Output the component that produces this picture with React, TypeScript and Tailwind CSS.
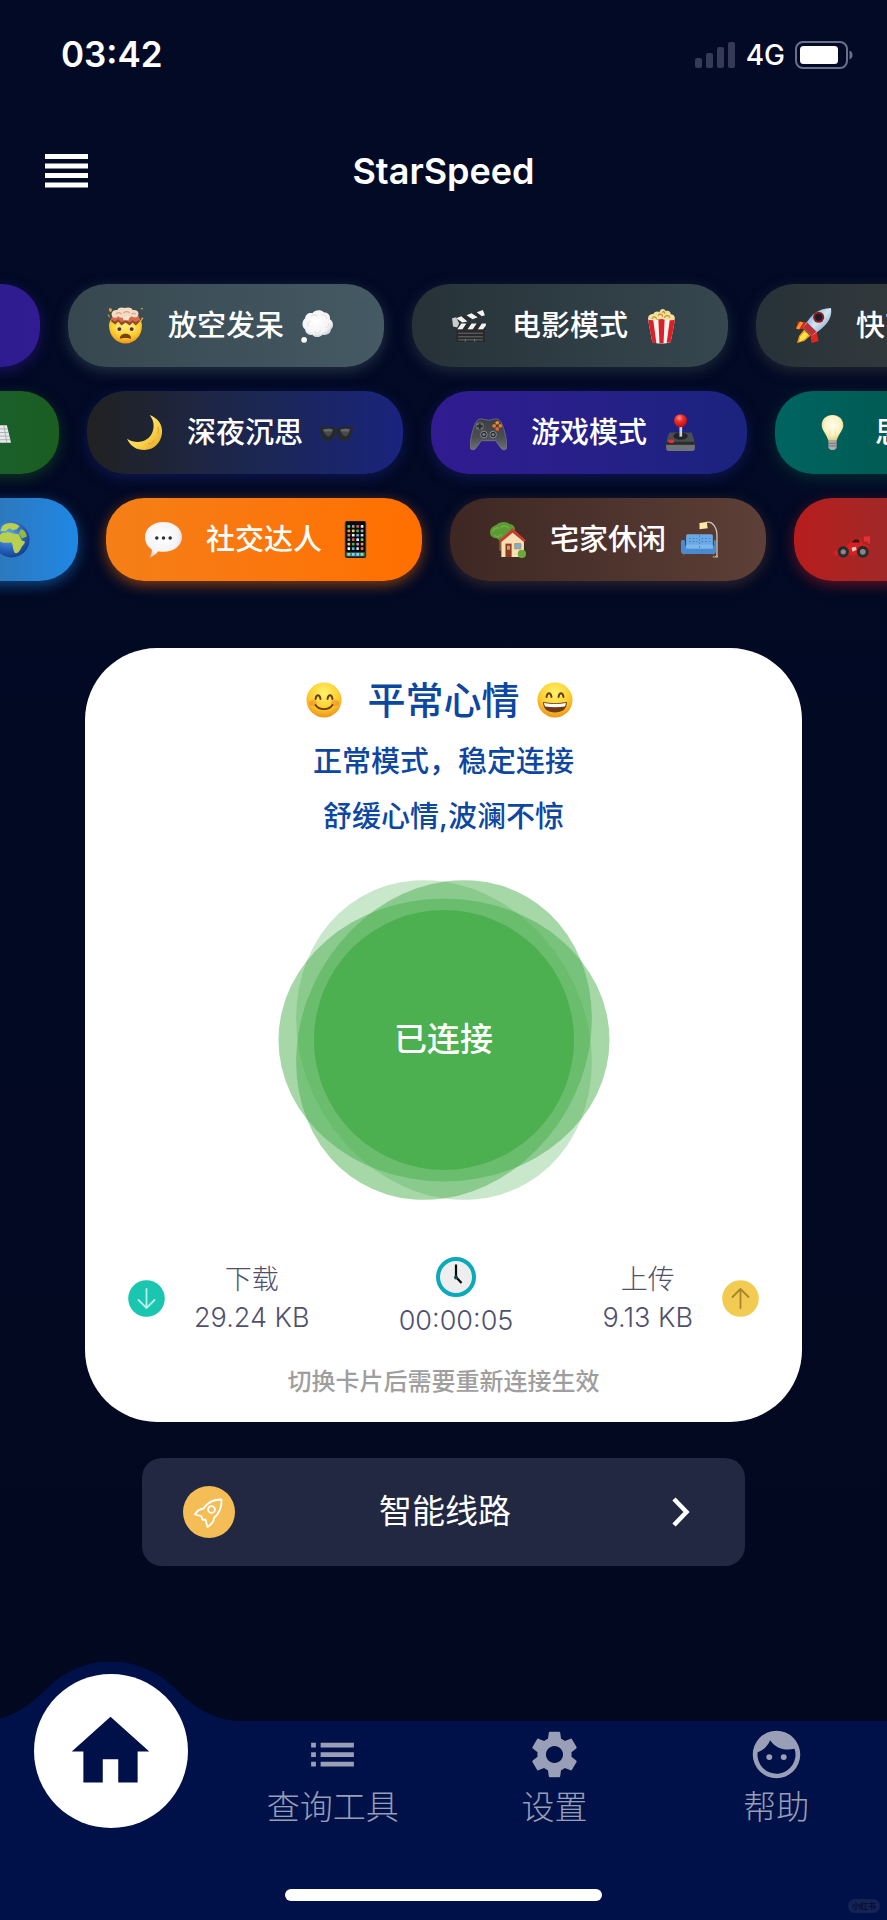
import type { ReactNode } from "react";
import { MdHome, MdList, MdSettings } from "react-icons/md";

function Emoji({ label, size = "size-[37px]", children }: { label: string; size?: string; children: ReactNode }) {
  return (
    <svg viewBox="0 0 36 36" role="img" aria-label={label} className={`${size} shrink-0`}>
      {children}
    </svg>
  );
}

function SharedGradients() {
  return (
    <svg width="0" height="0" className="absolute" aria-hidden="true">
      <defs>
        <radialGradient id="face" cx="0.5" cy="0.3" r="0.75">
          <stop offset="0" stopColor="#fff36b" />
          <stop offset="0.55" stopColor="#fdd032" />
          <stop offset="1" stopColor="#ec8a13" />
        </radialGradient>
        <radialGradient id="cloud" cx="0.45" cy="0.4" r="0.65">
          <stop offset="0" stopColor="#ffffff" />
          <stop offset="0.7" stopColor="#f4f4f6" />
          <stop offset="1" stopColor="#c4c6cc" />
        </radialGradient>
        <linearGradient id="moon" x1="0" y1="0" x2="1" y2="1">
          <stop offset="0" stopColor="#fff2a0" />
          <stop offset="0.6" stopColor="#fbd44c" />
          <stop offset="1" stopColor="#dfa024" />
        </linearGradient>
        <radialGradient id="bulb" cx="0.5" cy="0.4" r="0.6">
          <stop offset="0" stopColor="#fffdf0" />
          <stop offset="0.6" stopColor="#fdf3c4" />
          <stop offset="1" stopColor="#e2cd86" />
        </radialGradient>
        <radialGradient id="ocean" cx="0.4" cy="0.35" r="0.7">
          <stop offset="0" stopColor="#5fb0ee" />
          <stop offset="0.6" stopColor="#2866c0" />
          <stop offset="1" stopColor="#123a86" />
        </radialGradient>
        <radialGradient id="redball" cx="0.4" cy="0.3" r="0.7">
          <stop offset="0" stopColor="#ff9a94" />
          <stop offset="0.4" stopColor="#f5302c" />
          <stop offset="1" stopColor="#b50f12" />
        </radialGradient>
        <linearGradient id="hull" x1="0" y1="0" x2="1" y2="1">
          <stop offset="0" stopColor="#3d7fc4" />
          <stop offset="0.5" stopColor="#d5e6f5" />
          <stop offset="1" stopColor="#5f86ad" />
        </linearGradient>
        <linearGradient id="pad" x1="0" y1="0" x2="0" y2="1">
          <stop offset="0" stopColor="#3c3d40" />
          <stop offset="0.6" stopColor="#4c4e52" />
          <stop offset="1" stopColor="#6c6f74" />
        </linearGradient>
      </defs>
    </svg>
  );
}

const ExplodingHead = () => (
  <Emoji label="爆炸头">
    <path d="M2 1l3 1-1 3-2-1zM33 1l2 0-1 2zM34 10l1.500 1-4 5zM0.500 7l2 1v3z" fill="#f3a51f" />
    <path d="M2 18c0-3 1-5 3-7h26c2 2 3 4 3 7 0 10-7 17.500-16 17.500S2 28 2 18z" fill="url(#face)" />
    <path d="M4 14l4 3 3-3 3 4 4-3 4 3 3-3 3 3 4-4-1-5H5z" fill="#8d4a2c" />
    <path d="M4 12l4 2 3-2 3 3 4-2 4 2 3-2 3 2 4-3-1-3H5z" fill="#d9694c" />
    <path d="M5 9C3 5 7 2 10 3c1-3 5-3 7-2 3-1 7-1 8 2 4-1 7 2 5 6-2 2-5 1-6 0-2 2-5 2-7 0-2 2-4 2-6 0-2 2-5 2-6 0z" fill="#f4dcc2" />
    <path d="M9 7c1-2 4-2 5 0M16 6c1-2 5-2 6 0M24 7c1-1 3-1 4 0" fill="none" stroke="#cfa585" strokeWidth="1.2" />
    <path d="M15 9h7l-1 4h-5z" fill="#f8e6cf" />
    <circle cx="12" cy="21" r="3.600" fill="#fbe08a" />
    <circle cx="24" cy="21" r="3.600" fill="#fbe08a" />
    <circle cx="12" cy="21.500" r="1.900" fill="#5a2f13" />
    <circle cx="24" cy="21.500" r="1.900" fill="#5a2f13" />
    <path d="M12.500 31c0-3.500 2.500-5 5.500-5s5.500 1.500 5.500 5c-2-1-9-1-11 0z" fill="#7a4014" />
  </Emoji>
);

const Thought = () => (
  <Emoji label="思考泡">
    <path d="M6 11c0-4 4-6 7-5 2-3 8-4 11-1 4 0 7 3 6 7 4 2 4 8 1 10 0 4-4 6-8 5-3 3-8 3-10 0-4 1-7-2-7-5-4-3-3-9 0-11z" fill="url(#cloud)" />
    <path d="M12 9c2-2 5-2 6 0M22 8c2-1 5 0 5 3M9 19c-1-2 0-5 2-5M26 20c2 0 3-2 3-4M15 24c2 2 5 1 6-1" fill="none" stroke="#e6e7eb" strokeWidth="1.300" strokeLinecap="round" />
    <circle cx="5" cy="32" r="2.800" fill="url(#cloud)" />
  </Emoji>
);

const Clapper = () => (
  <Emoji label="场记板">
    <path d="M2 12L31 3l2 5L4 16z" fill="#2a2a2c" />
    <path d="M5 11l6 4 5-1-6-5zM15 8l6 4 5-2-6-4zM25 5l5 4 3-1-2-5z" fill="#f2f2f2" />
    <path d="M4 16h30v6H4z" fill="#2a2a2c" />
    <path d="M6 22l4-6h5l-4 6zM16 22l4-6h5l-4 6zM26 22l4-6h4v2l-3 4z" fill="#f2f2f2" />
    <path d="M1 11l4-1 3 6-2 4-4-1z" fill="#c9ccd0" />
    <path d="M5 22h28v12H5z" fill="#29292b" />
    <path d="M7 25.500h24M7 29h24M7 32h24M14 31v3M23 31v3" stroke="#7a7b7e" strokeWidth="0.800" />
  </Emoji>
);

const Popcorn = () => (
  <Emoji label="爆米花">
    <path d="M6 14C3 10 7 6 10 7c1-3 5-3 6-2 1-4 5-4 6-1 3-1 5 1 5 3 4 0 5 4 3 7z" fill="#f5df9a" />
    <path d="M9 11c1-2 3-2 4 0M15 8c1-2 4-1 4 1M21 10c1-2 4-2 5 0M13 13c1-1 3-1 4 0M19 5c1-1 2 0 2 1" fill="none" stroke="#b98f33" strokeWidth="1.200" strokeLinecap="round" />
    <path d="M5 13c3-2 5 1 7-1 2 2 4-1 6 0 2-1 4 2 6 0 3 2 5 0 7 1l-4 21c-5 2-13 2-18 0z" fill="#f6f3f0" />
    <path d="M5 13c2-1 4 0 5 0l3 22c-2 0-3 0-4-1zM15 12.500c2-1 4-1 6 0l-1 22.800h-4zM26 13c2 0 4-1 5 0l-4 21-4 1z" fill="#dd2027" />
  </Emoji>
);

const Rocket = () => (
  <Emoji label="火箭">
    <path d="M12 15L3 14l-2 7 9 1z" fill="#e2261d" />
    <path d="M21 24l2 9-7 2-1-9z" fill="#e2261d" />
    <path d="M5 14l-4 7 3 1 4-7z" fill="#f59a1a" />
    <path d="M9 22L4 28 2 35l7-2 6-5z" fill="#f59a1a" />
    <path d="M9 24l-4 5-1 5 6-3 3-4z" fill="#ffe14a" />
    <path d="M35 1c1 6-1 12-6 17-4 4-8 7-13 10l-8-8c3-5 6-9 10-13C23 3 29 1 35 1z" fill="url(#hull)" />
    <path d="M12 15l9 9-5 4-8-8z" fill="#b8323a" />
    <circle cx="23" cy="10" r="5.400" fill="#8f1d1e" />
    <circle cx="23" cy="10" r="3.400" fill="#181b28" />
  </Emoji>
);

const Keyboard = () => (
  <Emoji label="键盘">
    <path d="M4 11h28l4 17H0z" fill="#e9eaec" />
    <path d="M4 14.500h29M3 18h30M2 21.500h32M1 25h34M9 11l-2 17M14 11l-1 17M19 11v17M24 11l1 17M29 11l3 17" stroke="#a4a7ab" strokeWidth="0.800" />
  </Emoji>
);

const Moon = () => (
  <Emoji label="月亮">
    <path d="M23 1c8 3 13 9 12 18-1 9-8 16-17 16-8 0-14-4-17-11 8 5 18 4 23-3 4-6 4-14-1-20z" fill="url(#moon)" />
    <path d="M31 13c1 2 1 4 0 6M27 26c-1 2-3 3-5 3" fill="none" stroke="#e2ad3a" strokeWidth="1.400" strokeLinecap="round" />
  </Emoji>
);

const Shades = () => (
  <Emoji label="墨镜">
    <path d="M1 13c5-1 10-1 13 0 2 1 6 1 8 0 3-1 8-1 13 0l-1 3c-1 0-1 2-2 5-1 4-4 5-7 5-4 0-6-3-7-8h-1c-1 5-3 8-7 8-3 0-6-1-7-5-1-3-1-5-2-5z" fill="#27282a" />
    <path d="M5 15c3-1 7-1 9 0 0 3-1 6-4 7-2-1-5-4-5-7zM22 15c3-1 7-1 9 0 0 3-2 6-4 7-3-1-5-4-5-7z" fill="#44494d" />
    <path d="M5 15c3-1 7-1 9 0v2H6zM22 15c3-1 7-1 9 0l-1 2h-8z" fill="#62696e" />
  </Emoji>
);

const Gamepad = () => (
  <Emoji label="游戏手柄">
    <path d="M9 5c3-1 5 1 9 1s6-2 9-1c5 1 9 20 9 27 0 3-4 4-6 1l-5-7H11l-5 7c-2 3-6 2-6-1C0 25 4 6 9 5z" fill="url(#pad)" stroke="#85888d" strokeWidth="0.600" />
    <circle cx="9.500" cy="12" r="4" fill="#6b6e73" />
    <path d="M8.500 9h2v2h2v2h-2v2h-2v-2h-2v-2h2z" fill="#2c2d30" />
    <circle cx="26.500" cy="8.500" r="1.800" fill="#f08a2c" />
    <circle cx="26.500" cy="14.500" r="1.800" fill="#f0602c" />
    <circle cx="23.500" cy="11.500" r="1.800" fill="#e8792a" />
    <circle cx="29.500" cy="11.500" r="1.800" fill="#e8792a" />
    <circle cx="13.500" cy="20" r="3.200" fill="#26272a" stroke="#8f9397" strokeWidth="0.900" />
    <circle cx="22.500" cy="20" r="3.200" fill="#26272a" stroke="#8f9397" strokeWidth="0.900" />
    <circle cx="13.500" cy="20" r="1.500" fill="#7d8185" />
    <circle cx="22.500" cy="20" r="1.500" fill="#7d8185" />
  </Emoji>
);

const Joystick = () => (
  <Emoji label="摇杆">
    <path d="M7 18h22l3 10H4z" fill="#4b4d50" />
    <path d="M4 28h28v5c0 2-1 3-3 3H7c-2 0-3-1-3-3z" fill="#6f7276" />
    <path d="M4 27h28v3H4z" fill="#2b2c2e" />
    <ellipse cx="18" cy="21.500" rx="7" ry="3.500" fill="#232426" />
    <path d="M17 10h2.600v12H17z" fill="#cfd2d5" />
    <circle cx="18" cy="6.500" r="6.300" fill="url(#redball)" />
    <ellipse cx="9" cy="26.500" rx="3" ry="1.700" fill="#ef2b2b" />
  </Emoji>
);

const Bulb = () => (
  <Emoji label="灯泡">
    <path d="M18 1c6 0 10.500 4 10.500 10 0 5-4.500 8-6.500 15h-8c-2-7-6.500-10-6.500-15C7.500 5 12 1 18 1z" fill="url(#bulb)" />
    <path d="M14 26h8v6c0 2-2 3-4 3s-4-1-4-3z" fill="#a9abad" />
    <path d="M14 28.500h8M14 31h8" stroke="#6f7275" strokeWidth="0.900" />
    <path d="M16 24l-1-8M20 24l1-8" fill="none" stroke="#f0dfa2" strokeWidth="0.800" />
  </Emoji>
);

const Earth = () => (
  <Emoji label="地球">
    <circle cx="18" cy="18" r="17.500" fill="url(#ocean)" />
    <path d="M9 5c4-4 12-4 17 0l-3 3-4 1-3-2-4 3-5 0zM6 14c3-3 9-4 13-2l6 1 3 6 3 1c0 3-3 4-4 7-2 4-4 5-6 4-2-3-1-7-3-10-4 0-8 1-11-1-2-2-2-4-1-6z" fill="#b9cf4f" />
    <path d="M27 8c3 0 5 3 6 7l-5 2-3-5z" fill="#93b843" />
  </Emoji>
);

const SpeechBubble = () => (
  <Emoji label="聊天气泡">
    <path d="M18 1c10 0 18 6 18 14.500S28 30 18 30c-2 0-4 0-5-.500-2 3-5 5-9 6 2-2 3-5 2.500-8C2.500 25 0 20.500 0 15.500 0 7 8 1 18 1z" fill="url(#cloud)" />
    <circle cx="11.500" cy="16.500" r="1.700" fill="#2b2c2f" />
    <circle cx="18" cy="16.500" r="1.700" fill="#2b2c2f" />
    <circle cx="24.500" cy="16.500" r="1.700" fill="#2b2c2f" />
  </Emoji>
);

const appColors = ["#5fd068", "#ffffff", "#b590d8", "#9aa0a6", "#57b7ea", "#f09a3e", "#e25b50", "#d8dde2", "#f0d264", "#eceff1", "#ef6c5a", "#4caf50"];

const Phone = () => (
  <Emoji label="手机">
    <rect x="8" y="0" width="20" height="36" rx="2" fill="#0a0b0c" stroke="#3c3d40" strokeWidth="0.800" />
    {[0, 1, 2, 3, 4, 5].map((row) =>
      [0, 1, 2, 3].map((col) => (
        <rect key={`${row}-${col}`} x={10.2 + col * 4.3} y={4 + row * 4.3} width="2.600" height="2.600" rx="0.600" fill={appColors[(row * 5 + col * 3) % 12]} />
      )),
    )}
    <path d="M9 30.500h18v4H9z" fill="#3c7d76" />
    <path d="M10.200 31.200h2.600v2.600h-2.600zM23 31.200h2.600v2.600H23z" fill="#8be08f" />
    <path d="M14.500 31.200h2.600v2.600h-2.600zM18.800 31.200h2.600v2.600h-2.600z" fill="#8fd0ef" />
  </Emoji>
);

const HouseTree = () => (
  <Emoji label="房子">
    <path d="M1 11c0-4 3-6 6-7 3-4 11-4 13-1 4 0 6 4 5 7 0 5-4 7-8 7-2 2-7 3-9 0-4 0-7-2-7-6z" fill="#5b9a35" />
    <path d="M4 10c1-3 4-4 6-3M12 6c2-2 6-1 7 1M6 14c2 2 5 1 6-1" fill="none" stroke="#75b044" strokeWidth="1.300" strokeLinecap="round" />
    <path d="M10 17h2v12h-2z" fill="#8a5a32" />
    <path d="M12 18l11-8 11 9v16H12z" fill="#f5e0b4" />
    <path d="M10 19L23 7l13 12-2 1.500-11-9L12 20.500z" fill="#c63a32" />
    <path d="M16 22h6v13h-6z" fill="#8c3b23" />
    <path d="M17.500 24h3v4h-3z" fill="#d59b68" />
    <path d="M25 22h6v5h-6z" fill="#6fb4e6" stroke="#b98748" strokeWidth="0.800" />
    <circle cx="32" cy="32" r="4" fill="#6cab3a" />
  </Emoji>
);

const CouchLamp = () => (
  <Emoji label="沙发和灯">
    <path d="M24 1.500c7-2 11 5 11 13v20" fill="none" stroke="#c9c3b6" strokeWidth="1.300" />
    <path d="M31 34h5v1.500h-5z" fill="#b9b3a6" />
    <path d="M18 2l7-1 1 6-8 1z" fill="#ffe9a8" />
    <path d="M5 15c0-2 1-2 3-2h20c2 0 3 0 3 2v12H5z" fill="#6aa9e6" />
    <path d="M0 20c0-2 4-2 4 0v4h28v-4c0-2 2-2 2 0v10c0 1-1 2-2 2H2c-1 0-2-1-2-2z" fill="#4a8bd0" />
    <path d="M5 23h26v4H5z" fill="#7db7ec" />
    <path d="M18 14v12M8 17h8M20 17h8M8 20h8M20 20h8" stroke="#3d78b8" strokeWidth="0.900" strokeDasharray="1.500 2" />
    <path d="M2 32h2l-1 3H2zM31 32h2v3h-1z" fill="#6b4a2b" />
  </Emoji>
);

const RaceCar = () => (
  <Emoji label="赛车">
    <path d="M0 32l2-3 9-3 9-8 6-1 3 5 6 2v7l-6 2H4z" fill="#d8201f" />
    <path d="M30 15h6v7h-2v-2h-4z" fill="#e33330" />
    <path d="M18 21l3-3h4l1 3z" fill="#3a1414" />
    <circle cx="10" cy="30" r="5.500" fill="#2a2a2c" />
    <circle cx="10" cy="30" r="2.600" fill="#85888b" />
    <circle cx="29" cy="30" r="5.800" fill="#2a2a2c" />
    <circle cx="29" cy="30" r="2.800" fill="#85888b" />
    <path d="M18 26l4-1 1 3-4 2z" fill="#f3c9c6" />
  </Emoji>
);

const Blush = () => (
  <Emoji label="微笑" size="size-[36px]">
    <circle cx="18" cy="18" r="17.500" fill="url(#face)" />
    <ellipse cx="7" cy="21" rx="4" ry="3" fill="#f4762f" opacity="0.450" />
    <ellipse cx="29" cy="21" rx="4" ry="3" fill="#f4762f" opacity="0.450" />
    <path d="M9.500 17c.8-5 4.200-5 5 0M21.500 17c.8-5 4.200-5 5 0" fill="none" stroke="#67391a" strokeWidth="1.900" strokeLinecap="round" />
    <path d="M9.500 23c4 5.500 13 5.500 17 0" fill="none" stroke="#67391a" strokeWidth="1.900" strokeLinecap="round" />
  </Emoji>
);

const Grin = () => (
  <Emoji label="大笑" size="size-[36px]">
    <circle cx="18" cy="18" r="17.500" fill="url(#face)" />
    <path d="M9.500 15c.8-5 4.200-5 5 0M21.500 15c.8-5 4.200-5 5 0" fill="none" stroke="#67391a" strokeWidth="1.900" strokeLinecap="round" />
    <path d="M6 20c8 1.500 16 1.500 24 0 0 7-5 10.500-12 10.500S6 27 6 20z" fill="#713a16" />
    <path d="M7 21c7 1.300 15 1.300 22 0-.2 1.500-.6 2.600-1.200 3.500-6 1-13.600 1-19.600 0-.6-.9-1-2-1.200-3.500z" fill="#fdfdfb" />
  </Emoji>
);

type Mood = { name?: string; before?: ReactNode; after?: ReactNode; tone: string };

const rows: { offset: string; moods: Mood[] }[] = [
  {
    offset: "-ml-[276px]",
    moods: [
      { tone: "from-[#1a237e] to-[#311b92] shadow-[#311b92]/50" },
      { name: "放空发呆", before: <ExplodingHead />, after: <Thought />, tone: "from-[#37474f] to-[#455a64] shadow-[#455a64]/50" },
      { name: "电影模式", before: <Clapper />, after: <Popcorn />, tone: "from-[#263238] to-[#37474f] shadow-[#37474f]/50" },
      { name: "快节奏", before: <Rocket />, tone: "from-[#263238] to-[#424242] shadow-[#424242]/50" },
    ],
  },
  {
    offset: "-ml-[257px]",
    moods: [
      { after: <Keyboard />, tone: "from-[#1b5e50] to-[#1b5e20] shadow-[#1b5e20]/50" },
      { name: "深夜沉思", before: <Moon />, after: <Shades />, tone: "from-[#212121] to-[#1a237e] shadow-[#1a237e]/50" },
      { name: "游戏模式", before: <Gamepad />, after: <Joystick />, tone: "from-[#311b92] to-[#1a237e] shadow-[#1a237e]/50" },
      { name: "思考", before: <Bulb />, tone: "from-[#006460] to-[#004d40] shadow-[#004d40]/50" },
    ],
  },
  {
    offset: "-ml-[238px]",
    moods: [
      { after: <Earth />, tone: "from-[#37474f] to-[#1e88e5] shadow-[#1e88e5]/50" },
      { name: "社交达人", before: <SpeechBubble />, after: <Phone />, tone: "from-[#f57f17] to-[#ff6f00] shadow-[#ff6f00]/50" },
      { name: "宅家休闲", before: <HouseTree />, after: <CouchLamp />, tone: "from-[#3e2723] to-[#5d4037] shadow-[#5d4037]/50" },
      { before: <RaceCar />, tone: "from-[#b71c1c] to-[#6f3238] shadow-[#b71c1c]/50" },
    ],
  },
];

function MoodPill({ mood }: { mood: Mood }) {
  return (
    <button
      type="button"
      className={`flex h-[83px] w-[316px] shrink-0 items-center rounded-[38px] bg-linear-to-r pr-[48px] pl-[39px] text-[29px] font-medium whitespace-nowrap text-white shadow-[0_4px_14px] ${mood.before ? "justify-start" : "justify-end"} ${mood.tone}`}
    >
      {mood.before}
      {mood.name && <span className="mr-[15px] ml-6">{mood.name}</span>}
      {mood.after}
    </button>
  );
}

function StatusBar() {
  return (
    <div className="flex h-[109px] items-center justify-between pr-[34px] pl-[61px]">
      <span className="text-[35px] font-semibold">03:42</span>
      <div className="flex items-center">
        <svg viewBox="0 0 40 26" className="h-[26px] w-[40px]" aria-label="信号" role="img" fill="#353b56">
          <rect x="0" y="16" width="7" height="10" rx="2" />
          <rect x="11" y="11" width="7" height="15" rx="2" />
          <rect x="22" y="5" width="7" height="21" rx="2" />
          <rect x="33" y="0" width="7" height="26" rx="2" />
        </svg>
        <span className="mr-[10px] ml-[11px] text-[28px] font-medium">4G</span>
        <svg viewBox="0 0 58 28" className="h-[28px] w-[58px]" aria-label="电量" role="img">
          <rect x="1" y="1" width="51" height="26" rx="7" fill="none" stroke="#6b7089" strokeWidth="2" />
          <rect x="5" y="5" width="38" height="18" rx="3.500" fill="#ffffff" />
          <path d="M54.500 9.500c4 1.500 4 7.500 0 9z" fill="#6b7089" />
        </svg>
      </div>
    </div>
  );
}

function ConnectButton() {
  return (
    <button type="button" className="mt-9 grid place-items-center text-[33px] font-medium text-white">
      <svg viewBox="-166 -160 332 320" className="col-start-1 row-start-1 h-[320px] w-[332px]" fill="#4caf50" aria-hidden="true">
        <ellipse rx="165.500" ry="141.500" transform="rotate(60)" opacity="0.300" />
        <ellipse rx="165.500" ry="141.500" transform="rotate(-60)" opacity="0.500" />
        <ellipse rx="165.500" ry="141.500" opacity="0.500" />
        <circle r="130" />
      </svg>
      <span className="col-start-1 row-start-1">已连接</span>
    </button>
  );
}

function Arrow({ up = false }: { up?: boolean }) {
  return (
    <svg viewBox="0 0 37 37" className="size-[37px] shrink-0" aria-hidden="true">
      <circle cx="18.500" cy="18.500" r="18.300" fill={up ? "#f2cc52" : "#1bc6b0"} />
      <path
        d={up ? "M18.500 28V9M10.500 17l8-8 8 8" : "M18.500 9v19M10.500 20l8 8 8-8"}
        fill="none"
        stroke={up ? "#a8852a" : "#b4f3e8"}
        strokeWidth="1.800"
        strokeLinecap="round"
        strokeLinejoin="round"
      />
    </svg>
  );
}

function Stats() {
  return (
    <div className="mt-[57px] flex w-full items-center justify-between px-[43px] text-[27px] leading-[38px] font-light text-[#4f506e]">
      <div className="flex items-center gap-[29px]">
        <Arrow />
        <div className="text-center">
          <p>下载</p>
          <p>29.24 KB</p>
        </div>
      </div>
      <div className="flex flex-col items-center gap-[5px]">
        <svg viewBox="0 0 40 40" className="size-[40px]" aria-label="时长" role="img">
          <circle cx="20" cy="20" r="18" fill="#eeeeee" stroke="#0ba9ba" strokeWidth="4" />
          <path d="M20 7.500V20l5.500 6" fill="none" stroke="#0a0a0a" strokeWidth="2.200" />
          <circle cx="20" cy="20.500" r="2" fill="#0a4a50" />
        </svg>
        <p>00:00:05</p>
      </div>
      <div className="flex items-center gap-[29px]">
        <div className="text-center">
          <p>上传</p>
          <p>9.13 KB</p>
        </div>
        <Arrow up />
      </div>
    </div>
  );
}

function RouteButton() {
  return (
    <button type="button" className="mx-[142px] mt-9 grid h-[108px] grid-cols-[52px_1fr_52px] items-center justify-items-center rounded-[20px] bg-[#222842] pr-[38px] pl-[41px] text-[33px] text-white">
      <svg viewBox="0 0 52 52" className="size-[52px]" aria-hidden="true">
        <circle cx="26" cy="26" r="26" fill="#f5bd55" />
        <g fill="none" stroke="#ffffff" strokeWidth="1.800" strokeLinejoin="round">
          <path d="M38.500 13.500c.4 8-2.500 14-7.500 18.500.3 3-3 7-6.500 9l-2-7.500-2.500.500-2-4-6-1.500c1.500-3 5-5.500 8.500-6C24 17 30 13.500 38.500 13.500z" />
          <circle cx="28.500" cy="23.500" r="3.400" />
        </g>
      </svg>
      <span>智能线路</span>
      <svg viewBox="0 0 18 30" className="h-[30px] w-[18px]" fill="none" stroke="#ffffff" strokeWidth="4.500" aria-hidden="true">
        <path d="M2 2l12.500 13L2 28" />
      </svg>
    </button>
  );
}

function FaceIcon() {
  return (
    <svg viewBox="0 0 24 24" className="size-[57px]" fill="currentColor" fillRule="evenodd" aria-hidden="true">
      <path d="M12 2a10 10 0 1 0 0 20 10 10 0 0 0 0-20zM9.300 6C8.400 8.300 6.500 10.200 4.060 11.100A8 8 0 1 0 19.600 9.600C15.300 10.600 11.400 9.200 9.300 6z" />
      <circle cx="8.950" cy="13.100" r="1.250" />
      <circle cx="15.050" cy="13.100" r="1.250" />
    </svg>
  );
}

function NavItem({ icon, label }: { icon: ReactNode; label: string }) {
  return (
    <a href="#" className="flex flex-col items-center gap-[2px] pt-[5px] text-[33px] leading-[44px] font-light text-white/60">
      {icon}
      {label}
    </a>
  );
}

function BottomNav() {
  return (
    <nav className="relative mt-auto bg-[#001149] pb-[19px]">
      <div className="grid grid-cols-4">
        <div className="relative flex justify-center">
          <svg viewBox="0 0 300 60" className="absolute -top-[59px] left-1/2 h-[60px] w-[300px] -translate-x-1/2" aria-hidden="true">
            <path d="M15 59.500C54 59.500 74 38 88 24.500A89 89 0 0 1 212 24.500C226 38 246 59.500 285 59.500z" fill="#001149" />
          </svg>
          <a href="#" aria-label="首页" className="relative -mt-[47px] flex size-[154px] items-center justify-center rounded-full bg-white">
            <MdHome className="size-[93px] text-[#001149]" />
          </a>
        </div>
        <NavItem icon={<MdList className="size-[57px]" />} label="查询工具" />
        <NavItem icon={<MdSettings className="size-[57px]" />} label="设置" />
        <NavItem icon={<FaceIcon />} label="帮助" />
      </div>
      <div className="mx-auto mt-[60px] h-3 w-[317px] rounded-full bg-white" />
      <span className="absolute right-[7px] bottom-[7px] rounded-full bg-[#152254] px-1 text-[8px] leading-[14px] font-bold text-[#050d3a]">小红书</span>
    </nav>
  );
}

export default function App() {
  return (
    <div className="flex min-h-screen flex-col overflow-hidden bg-linear-to-b from-[#020a26] to-[#02081f] font-[Inter,'Noto_Sans_CJK_SC',sans-serif] text-white">
      <SharedGradients />
      <StatusBar />
      <header className="grid h-[124px] grid-cols-[1fr_auto_1fr] items-center px-[45px]">
        <button type="button" aria-label="菜单" className="w-[43px]">
          <svg viewBox="0 0 43 34" className="h-[34px] w-[43px]" fill="#ffffff" aria-hidden="true">
            <path d="M0 0h43v5H0zM0 9.500h43v5H0zM0 19h43v5H0zM0 28.500h43v5H0z" />
          </svg>
        </button>
        <h1 className="text-[36px] font-semibold">StarSpeed</h1>
      </header>
      <section className="flex flex-col gap-6 pt-[51px] pb-[67px]">
        {rows.map((row) => (
          <div key={row.offset} className={`flex gap-[28px] ${row.offset}`}>
            {row.moods.map((mood) => (
              <MoodPill key={mood.tone} mood={mood} />
            ))}
          </div>
        ))}
      </section>
      <main className="mx-[85px] flex flex-col items-center rounded-[72px] bg-white pt-[22px] pb-[22px] text-[#0d47a1]">
        <div className="flex items-center pr-2 text-[38px] leading-[60px] font-medium">
          <Blush />
          <h2 className="mr-[17px] ml-[25px]">平常心情</h2>
          <Grin />
        </div>
        <div className="mt-1 text-center text-[29px] leading-[55px] font-medium">
          <p>正常模式，稳定连接</p>
          <p>舒缓心情,波澜不惊</p>
        </div>
        <ConnectButton />
        <Stats />
        <p className="mt-6 text-[24px] leading-[36px] font-medium text-[#9e9e9e]">切换卡片后需要重新连接生效</p>
      </main>
      <RouteButton />
      <BottomNav />
    </div>
  );
}
